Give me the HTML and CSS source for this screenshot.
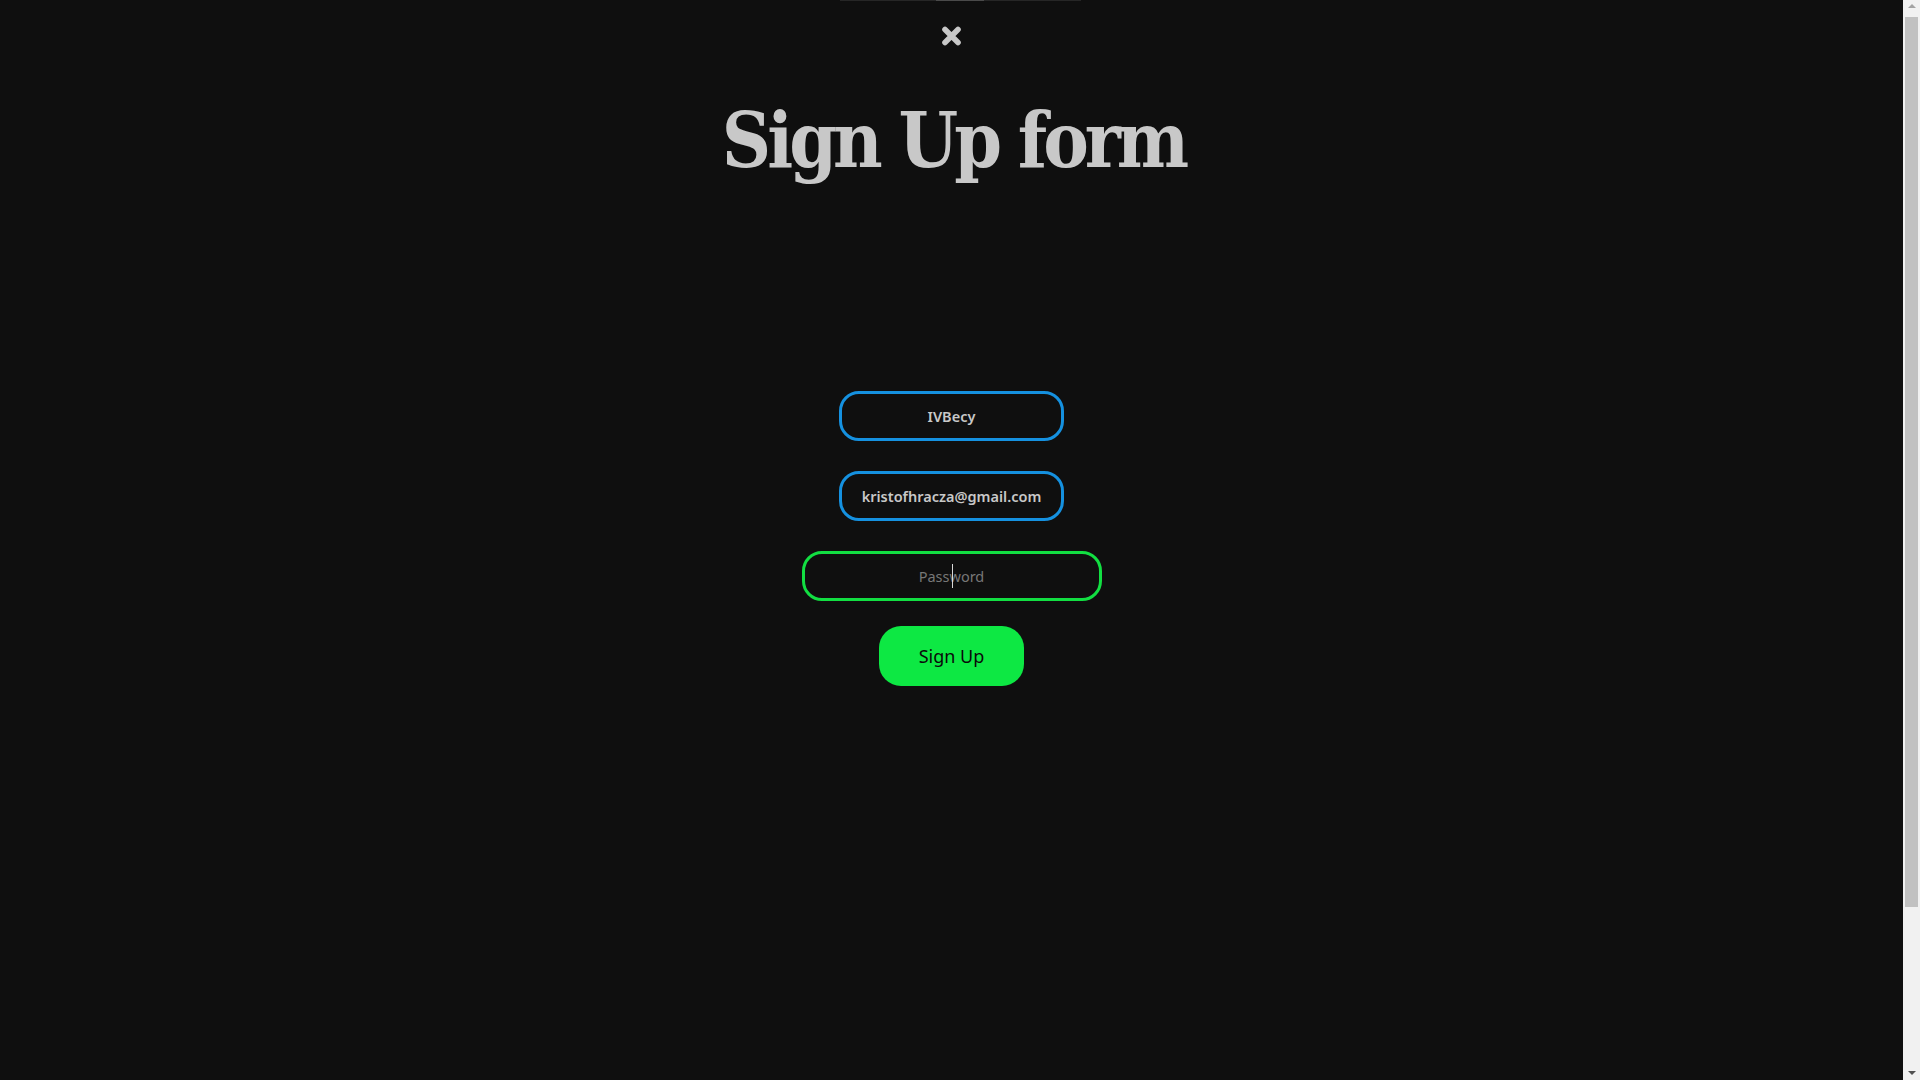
FILE: index.html
```html
<!DOCTYPE html>
<html lang="en">
<head>
<meta charset="utf-8">
<title>Sign Up form</title>
<link rel="stylesheet" href="styles.css">
</head>
<body>
<div class="topline"><span class="topline-active"></span></div>
<main class="page">
  <button class="close" type="button" aria-label="Close">
    <svg width="21" height="20" viewBox="0 0 21 20"><path d="M4 3.5 L17 16.5 M17 3.5 L4 16.5" stroke="#c8c8c8" stroke-width="5.6" stroke-linecap="round"/></svg>
  </button>
  <h1 class="title">Sign Up form</h1>
  <form class="form">
    <input class="field" type="text" value="IVBecy">
    <input class="field" type="email" value="kristofhracza@gmail.com">
    <div class="field-wrap">
      <input class="field field-wide field-active" type="password" placeholder="Password">
      <span class="caret"></span>
    </div>
    <button class="submit" type="button">Sign Up</button>
  </form>
</main>
<div class="scrollbar">
  <span class="arrow arrow-up"></span>
  <span class="thumb"></span>
  <span class="arrow arrow-down"></span>
</div>
</body>
</html>
```
FILE: styles.css
```css
html, body {
  margin: 0;
  padding: 0;
  background: #0f0f0f;
}

body {
  font-family: "Noto Sans", "Open Sans", sans-serif;
  color: #c8c8c8;
}

.topline {
  position: absolute;
  top: 0;
  left: 840px;
  width: 241px;
  height: 1px;
  background: #262626;
}

.topline-active {
  position: absolute;
  top: 0;
  left: 96px;
  width: 48px;
  height: 1px;
  background: #4a4a4a;
}

.page {
  width: calc(100% - 17px);
  min-height: 1270px;
  display: flex;
  flex-direction: column;
  align-items: center;
}

.close {
  margin-top: 26px;
  padding: 0;
  border: 0;
  background: none;
  width: 21px;
  height: 20px;
  display: block;
  cursor: pointer;
}

.close svg {
  display: block;
}

.title {
  margin: 56px 0 0;
  padding-left: 4px;
  font-family: "DejaVu Serif", serif;
  font-stretch: condensed;
  font-weight: 700;
  font-size: 76px;
  line-height: 78px;
  color: #c8c8c8;
  letter-spacing: -4px;
}

.form {
  margin-top: 211px;
  display: flex;
  flex-direction: column;
  align-items: center;
}

.field {
  box-sizing: border-box;
  width: 225px;
  height: 50px;
  margin: 0 0 30px;
  border: 3px solid #1591e0;
  border-radius: 20px;
  background: transparent;
  color: #c8c8c8;
  font-family: "Noto Sans", "Open Sans", sans-serif;
  font-weight: 600;
  font-size: 14.5px;
  text-align: center;
  outline: none;
  padding: 0 10px;
}

.field-wrap {
  position: relative;
  margin-bottom: 25px;
}

.field-wide {
  width: 300px;
  margin: 0;
  display: block;
}

.field-active {
  border-color: #12df42;
}

.field::placeholder {
  color: #777777;
  font-weight: 400;
}

.caret {
  position: absolute;
  left: 150px;
  top: 13px;
  width: 1px;
  height: 24px;
  background: #d8d8d8;
}

.submit {
  box-sizing: border-box;
  width: 145px;
  height: 60px;
  border: 0;
  border-radius: 22px;
  background: #0de843;
  color: #0a0a0a;
  font-family: "Noto Sans", "Open Sans", sans-serif;
  font-size: 18px;
  font-weight: 400;
  cursor: pointer;
}

.scrollbar {
  position: fixed;
  top: 0;
  right: 0;
  width: 17px;
  height: 100vh;
  background: #f1f1f1;
  display: flex;
  flex-direction: column;
  align-items: center;
}

.thumb {
  display: block;
  width: 13px;
  height: 890px;
  background: #c1c1c1;
  margin-top: 0;
}

.arrow {
  display: block;
  width: 0;
  height: 0;
  border-left: 4px solid transparent;
  border-right: 4px solid transparent;
}

.arrow-up {
  margin: 4px 0 9px;
  border-bottom: 4px solid #a3a3a3;
}

.arrow-down {
  margin-top: auto;
  margin-bottom: 5px;
  border-top: 4px solid #505050;
}
```
